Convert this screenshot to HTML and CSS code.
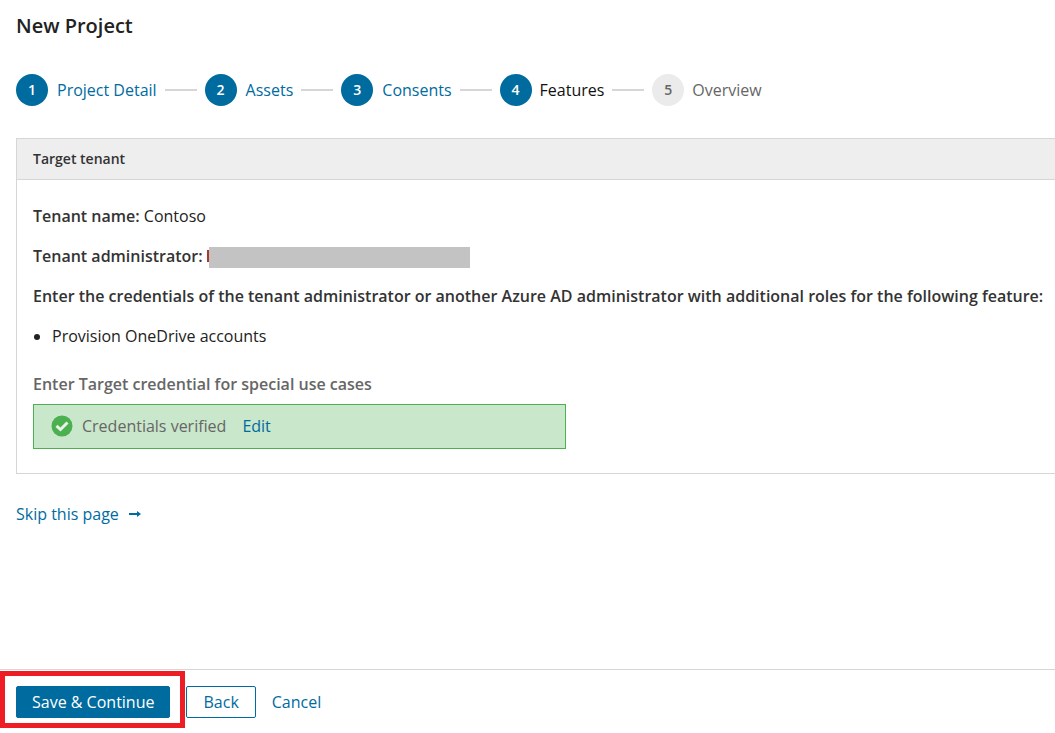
FILE: index.html
```html
<!DOCTYPE html>
<html lang="en">

<head>
    <meta charset="UTF-8">
    <meta name="viewport" content="width=device-width, initial-scale=1.0">
    <title>New Project</title>
    <link rel="stylesheet" href="styles.css">
</head>

<body>
    <main>
        <h1>New Project</h1>

        <ol class="steps">
            <li class="step"><a href="#detail"><span class="number">1</span>Project Detail</a></li>
            <li class="step"><a href="#assets"><span class="number">2</span>Assets</a></li>
            <li class="step"><a href="#consents"><span class="number">3</span>Consents</a></li>
            <li class="step current" aria-current="step"><span class="number">4</span>Features</li>
            <li class="step pending"><span class="number">5</span>Overview</li>
        </ol>

        <section class="panel">
            <h2>Target tenant</h2>
            <div class="panel-body">
                <p><strong>Tenant name:</strong> Contoso</p>
                <p class="admin"><strong>Tenant administrator:</strong> <span class="redacted"></span></p>
                <p><strong>Enter the credentials of the tenant administrator or another Azure AD administrator with additional roles for the following feature:</strong></p>
                <ul>
                    <li>Provision OneDrive accounts</li>
                </ul>
                <h3>Enter Target credential for special use cases</h3>
                <div class="verified">
                    <svg class="check" viewBox="0 0 22 22" aria-hidden="true">
                        <circle cx="11" cy="11" r="10.5" fill="#4caf50"/>
                        <path d="M5.5 10.8l4 3.7 7-7" fill="none" stroke="#e6f4e7" stroke-width="3"/>
                    </svg>
                    <span>Credentials verified</span>
                    <a href="#edit">Edit</a>
                </div>
            </div>
        </section>

        <a class="skip" href="#overview">Skip this page
            <svg class="arrow" viewBox="0 0 12 8" aria-hidden="true">
                <path d="M0 3h8V1l4 3-4 3V5H0z" fill="#006b9f"/>
            </svg>
        </a>
    </main>

    <footer>
        <div class="highlight">
            <button class="primary">Save &amp; Continue</button>
        </div>
        <button class="secondary">Back</button>
        <button class="text-button">Cancel</button>
    </footer>
</body>

</html>
```
FILE: styles.css
```css
body {
    display: flex;
    flex-direction: column;
    min-height: 100vh;
    margin: 0;
    font-family: "Open Sans", "Noto Sans", sans-serif;
    font-size: 16px;
    line-height: 24px;
    color: #222;
    background-color: #fff;
}

main {
    flex: 1;
    padding: 12px 0 16px 16px;
}

a {
    color: #006b9f;
    text-decoration: none;
}

h1 {
    margin: 0 0 34px;
    font-size: 20px;
    font-weight: 600;
    line-height: 28px;
}

.steps {
    display: flex;
    gap: 8px;
    margin: 0 0 32px;
    padding: 0;
    list-style: none;
}

.step {
    display: flex;
    align-items: center;
    gap: 8px;
}

.step a {
    display: flex;
    align-items: center;
    gap: 9px;
}

.step:not(:last-child)::after {
    content: "";
    width: 32px;
    height: 2px;
    background-color: #d6d6d6;
}

.number {
    width: 32px;
    height: 32px;
    border-radius: 50%;
    background-color: #006b9f;
    color: #fff;
    font-size: 14px;
    font-weight: 600;
    line-height: 32px;
    text-align: center;
}

.current {
    color: #111;
}

.pending {
    color: #666;
}

.pending .number {
    background-color: #ebebeb;
    color: #666;
}

.panel {
    margin-bottom: 28px;
    border: 1px solid #d6d6d6;
    border-right: none;
}

.panel h2 {
    margin: 0;
    padding: 8px 16px;
    border-bottom: 1px solid #d6d6d6;
    background-color: #eee;
    color: #333;
    font-size: 14px;
    font-weight: 600;
}

.panel-body {
    padding: 24px 0 24px 16px;
}

.panel-body p {
    margin: 0 0 16px;
}

.admin {
    display: flex;
    align-items: flex-end;
    gap: 4px;
}

strong {
    color: #333;
    font-weight: 600;
}

/* grey bar over the address, the edge of its first letter still shows */
.redacted {
    width: 263px;
    height: 21px;
    background:
        linear-gradient(#a33a2a, #a33a2a) 0 3px / 2px 12px no-repeat,
        linear-gradient(#c3c3c3, #c3c3c3) 100% 0 / 261px 21px no-repeat;
}

ul {
    margin: 0 0 24px;
    padding-left: 19px;
}

h3 {
    margin: 0 0 8px;
    color: #666;
    font-size: 16px;
    font-weight: 600;
}

.verified {
    display: flex;
    align-items: center;
    max-width: 514px;
    padding: 9px 0 10px 17px;
    border: 1px solid #4caf50;
    background-color: #c9e7cb;
    color: #666;
}

.verified a {
    margin-left: 16px;
}

.check {
    width: 22px;
    height: 22px;
    margin-right: 9px;
}

.skip {
    display: inline-flex;
    align-items: center;
    gap: 10px;
}

.arrow {
    width: 12px;
    height: 8px;
}

footer {
    display: flex;
    gap: 16px;
    padding: 16px 16px 15px;
    border-top: 1px solid #d6d6d6;
}

button {
    height: 32px;
    padding: 0 16px;
    border: 1px solid #006b9f;
    border-radius: 2px;
    background-color: #fff;
    color: #006b9f;
    font: inherit;
    cursor: pointer;
}

.primary {
    padding: 0 15px;
    background-color: #006b9f;
    color: #fff;
}

.text-button {
    padding: 0;
    border: none;
}

.highlight {
    position: relative;
}

/* frame drawn around the main action */
.highlight::after {
    content: "";
    position: absolute;
    inset: -15px -15px -10px -16px;
    border: 5px solid #ee1c25;
    pointer-events: none;
}
```
